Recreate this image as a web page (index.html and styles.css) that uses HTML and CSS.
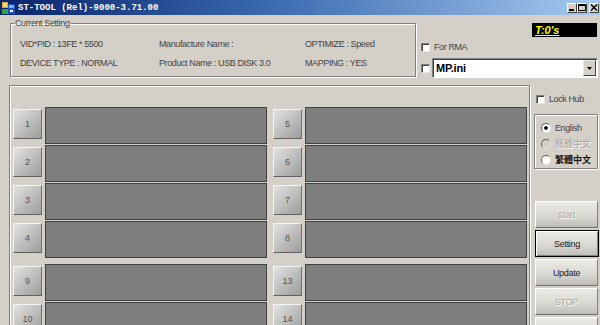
FILE: index.html
```html
<!DOCTYPE html>
<html lang="en">
<head>
    <meta charset="UTF-8">
    <meta name="viewport" content="width=device-width, initial-scale=1.0">
    <title>ST-TOOL (Rel)-9000-3.71.00</title>
    <link rel="stylesheet" href="styles.css">
</head>
<body>

<div class="window">
    <!-- title bar -->
    <div class="titlebar">
        <svg class="app-icon" width="13" height="13" viewBox="0 0 13 13">
            <rect x="0" y="1" width="6" height="6" fill="#e8a030"/>
            <rect x="1" y="2" width="4" height="4" fill="#f8e070"/>
            <rect x="6" y="3" width="7" height="10" fill="#2050c0"/>
            <rect x="7" y="4" width="5" height="3" fill="#80b0f0"/>
            <rect x="0" y="8" width="6" height="5" fill="#30a040"/>
            <rect x="8" y="9" width="3" height="2" fill="#fff"/>
        </svg>
        <span class="title">ST-TOOL (Rel)-9000-3.71.00</span>
        <div class="caption-buttons">
            <span class="cap-btn">
                <svg width="8" height="7" viewBox="0 0 8 7"><rect x="1" y="5" width="5" height="2" fill="#000"/></svg>
            </span>
            <span class="cap-btn">
                <svg width="8" height="7" viewBox="0 0 8 7"><path d="M0.5 0.5h7v6h-7z M0.5 1.5h7" fill="none" stroke="#000"/></svg>
            </span>
            <span class="cap-btn close">
                <svg width="8" height="7" viewBox="0 0 8 7"><path d="M1 0.5l6 6M7 0.5l-6 6" stroke="#000" stroke-width="1.4"/></svg>
            </span>
        </div>
    </div>

    <!-- current setting -->
    <div class="top">
        <fieldset class="setting">
            <legend>Current Setting</legend>
            <div class="info">
                <span>VID*PID : 13FE * 5500</span>
                <span>Manufacture Name :</span>
                <span>OPTIMIZE : Speed</span>
                <span>DEVICE TYPE : NORMAL</span>
                <span>Product Name : USB DISK 3.0</span>
                <span>MAPPING : YES</span>
            </div>
        </fieldset>

        <div class="top-side">
            <div class="timer"><span>T:0's</span></div>
            <label class="check"><span class="box"></span>For RMA</label>
            <div class="combo-row">
                <span class="box"></span>
                <div class="combo">
                    <span class="combo-text">MP.ini</span>
                    <span class="drop">
                        <svg width="5" height="3" viewBox="0 0 5 3"><path d="M0 0h5l-2.5 3z" fill="#000"/></svg>
                    </span>
                </div>
            </div>
        </div>
    </div>

    <!-- ports + controls -->
    <div class="main">
        <div class="ports">
            <div class="bank">
                <div class="port"><span class="port-num">1</span><span class="port-view"></span></div>
                <div class="port"><span class="port-num">2</span><span class="port-view"></span></div>
                <div class="port"><span class="port-num">3</span><span class="port-view"></span></div>
                <div class="port"><span class="port-num">4</span><span class="port-view"></span></div>
            </div>
            <div class="bank">
                <div class="port"><span class="port-num">5</span><span class="port-view"></span></div>
                <div class="port"><span class="port-num">6</span><span class="port-view"></span></div>
                <div class="port"><span class="port-num">7</span><span class="port-view"></span></div>
                <div class="port"><span class="port-num">8</span><span class="port-view"></span></div>
            </div>
            <div class="bank">
                <div class="port"><span class="port-num">9</span><span class="port-view"></span></div>
                <div class="port"><span class="port-num">10</span><span class="port-view"></span></div>
                <div class="port"><span class="port-num">11</span><span class="port-view"></span></div>
                <div class="port"><span class="port-num">12</span><span class="port-view"></span></div>
            </div>
            <div class="bank">
                <div class="port"><span class="port-num">13</span><span class="port-view"></span></div>
                <div class="port"><span class="port-num">14</span><span class="port-view"></span></div>
                <div class="port"><span class="port-num">15</span><span class="port-view"></span></div>
                <div class="port"><span class="port-num">16</span><span class="port-view"></span></div>
            </div>
        </div>

        <div class="side">
            <label class="check lock"><span class="box"></span>Lock Hub</label>
            <div class="lang">
                <label class="radio-row"><span class="radio checked"></span>English</label>
                <label class="radio-row disabled"><span class="radio"></span>簡體中文</label>
                <label class="radio-row cjk"><span class="radio"></span>繁體中文</label>
            </div>
            <div class="buttons">
                <button class="btn disabled">Start</button>
                <button class="btn default">Setting</button>
                <button class="btn">Update</button>
                <button class="btn disabled">STOP</button>
                <button class="btn"></button>
            </div>
        </div>
    </div>
</div>

</body>
</html>
```

FILE: styles.css
```css
/* window */
body {
    margin: 0;
    width: 600px;
    height: 325px;
    overflow: hidden;
    background: #d4d0c8;
    font-family: "Liberation Sans", Arial, sans-serif;
    font-size: 9px;
    letter-spacing: -0.4px;
    color: #444;
}
.window {
    width: 600px;
}

/* title bar */
.titlebar {
    height: 15px;
    display: flex;
    align-items: center;
    background: linear-gradient(to right, #0a246a, #3a6ab0 45%, #a6caf0);
}
.app-icon {
    margin-left: 2px;
}
.title {
    margin-left: 3px;
    font-family: "Liberation Mono", "Courier New", monospace;
    font-weight: bold;
    font-size: 9px;
    letter-spacing: 0;
    color: #fff;
}
.caption-buttons {
    margin-left: auto;
    margin-right: 1px;
    display: flex;
}
.cap-btn {
    width: 10px;
    height: 10px;
    display: flex;
    align-items: center;
    justify-content: center;
    background: #d4d0c8;
    border: 1px solid;
    border-color: #fff #404040 #404040 #fff;
    box-sizing: border-box;
}
.cap-btn.close {
    margin-left: 2px;
}

/* current setting */
.top {
    height: 70px;
    display: flex;
}
.setting {
    margin: 3px 0 0 10px;
    padding: 0;
    width: 406px;
    height: 59px;
    box-sizing: border-box;
    border: 1px solid #808080;
    box-shadow: inset 1px 1px 0 #fff, 1px 1px 0 #fff;
}
.setting legend {
    margin-left: 3px;
    padding: 0 1px;
    line-height: 10px;
}
.info {
    margin-top: 6px;
    padding-left: 9px;
    display: grid;
    grid-template-columns: 139px 146px auto;
    grid-auto-rows: 19px;
    align-items: center;
}

.top-side {
    flex: 1;
    padding-left: 5px;
    display: flex;
    flex-direction: column;
}
.timer {
    align-self: flex-end;
    margin: 8px 3px 0 0;
    width: 65px;
    height: 14px;
    background: #000;
    display: flex;
    align-items: center;
    padding-left: 3px;
    box-sizing: border-box;
}
.timer span {
    color: #ffff00;
    font-size: 11px;
    font-weight: bold;
    font-style: italic;
    text-decoration: underline;
    letter-spacing: 0;
}
.check {
    display: flex;
    align-items: center;
    gap: 4px;
    height: 10px;
}
.top-side .check {
    margin-top: 5px;
}
.box {
    width: 9px;
    height: 9px;
    box-sizing: border-box;
    background: #fff;
    border: 1px solid;
    border-color: #808080 #e8e8e8 #e8e8e8 #808080;
    box-shadow: inset 1px 1px 0 #404040;
    flex: none;
}
.combo-row {
    margin-top: 6px;
    display: flex;
    align-items: center;
    gap: 2px;
}
.combo {
    width: 166px;
    height: 20px;
    box-sizing: border-box;
    background: #fff;
    border: 1px solid;
    border-color: #808080 #fff #fff #808080;
    box-shadow: inset 1px 1px 0 #404040;
    display: flex;
    align-items: center;
}
.combo-text {
    margin-left: 3px;
    font-size: 11px;
    font-weight: bold;
    letter-spacing: -0.2px;
    color: #000;
}
.drop {
    margin: 0 1px 0 auto;
    width: 13px;
    height: 16px;
    box-sizing: border-box;
    background: #d4d0c8;
    border: 1px solid;
    border-color: #e8e8e8 #404040 #404040 #e8e8e8;
    display: flex;
    align-items: center;
    justify-content: center;
}

/* ports */
.main {
    display: flex;
}
.ports {
    margin-left: 9px;
    padding: 21px 2px 0 3px;
    height: 260px;
    border: 1px solid #808080;
    box-shadow: inset 1px 1px 0 #fff, 1px 1px 0 #fff;
    display: grid;
    grid-template-columns: 254px 254px;
    column-gap: 6px;
    row-gap: 6px;
    align-content: start;
}
.bank {
    display: grid;
    row-gap: 1px;
}
.port {
    height: 37px;
    display: grid;
    grid-template-columns: 29px 222px;
    column-gap: 3px;
}
.port-num {
    margin-top: 2px;
    height: 30px;
    box-sizing: border-box;
    border: 1px solid;
    border-color: #f4f4f4 #707070 #606060 #f4f4f4;
    background: linear-gradient(135deg, #e2e2e0, #b8b8b6 60%, #9c9c9a);
    display: flex;
    align-items: center;
    justify-content: center;
    color: #555;
    letter-spacing: 0;
}
.port-view {
    box-sizing: border-box;
    border: 1px solid #404040;
    background: #7e7e7e;
}

/* controls */
.side {
    margin-left: 4px;
    width: 64px;
    display: flex;
    flex-direction: column;
}
.lock {
    margin: 9px 0 0 2px;
}
.lang {
    margin-top: 10px;
    height: 55px;
    box-sizing: border-box;
    border: 1px solid #808080;
    box-shadow: inset 1px 1px 0 #fff, 1px 1px 0 #fff;
    padding: 7px 0 0 6px;
    display: flex;
    flex-direction: column;
    gap: 5px;
}
.radio-row {
    display: flex;
    align-items: center;
    gap: 4px;
    height: 11px;
    font-size: 9px;
}
.radio {
    width: 8px;
    height: 8px;
    border-radius: 50%;
    background: #fff;
    border: 1px solid;
    border-color: #606060 #e8e8e8 #e8e8e8 #606060;
}
.radio.checked {
    background: radial-gradient(circle, #000 1.5px, #fff 2px);
}
.radio-row.disabled {
    color: #a0a0a0;
    text-shadow: 1px 1px 0 #fff;
}
.radio-row.disabled .radio {
    background: #d4d0c8;
}
.radio-row.cjk {
    color: #111;
    font-weight: bold;
}
.radio-row.disabled,
.radio-row.cjk {
    font-family: "Noto Sans CJK TC", "Noto Sans CJK SC", sans-serif;
    letter-spacing: 0;
}
.buttons {
    margin-top: 32px;
    display: flex;
    flex-direction: column;
    gap: 2px;
}
.btn {
    width: 63px;
    height: 27px;
    margin: 0 0 0 1px;
    padding: 0;
    box-sizing: border-box;
    border: 1px solid;
    border-color: #fff #808080 #707070 #fff;
    background: linear-gradient(to bottom, #ecebe6, #d8d6d0 60%, #bebcb6);
    font-family: "Liberation Sans", Arial, sans-serif;
    font-size: 9px;
    letter-spacing: -0.3px;
    color: #222;
}
.btn.disabled {
    color: #a8a8a8;
    text-shadow: 1px 1px 0 #fff;
}
.btn.default {
    width: 64px;
    border: 1px solid #000;
    box-shadow: inset 1px 1px 0 #fff, inset -1px -1px 0 #808080;
}
```
